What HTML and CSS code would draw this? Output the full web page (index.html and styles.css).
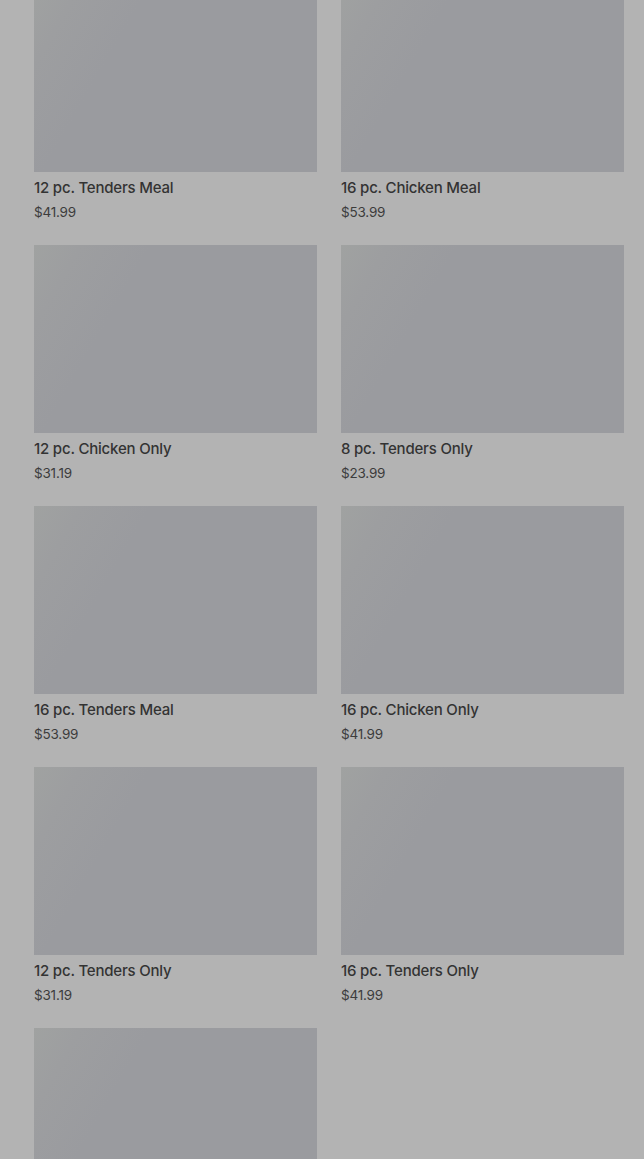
FILE: index.html
```html
<!DOCTYPE html>
<html>
<head>
<meta charset="utf-8">
<link rel="stylesheet" href="styles.css">
</head>
<body>
<div class="grid">
  <div class="card"><div class="thumb"></div><div class="title">12 pc. Tenders Meal</div><div class="price">$41.99</div></div>
  <div class="card"><div class="thumb"></div><div class="title">16 pc. Chicken Meal</div><div class="price">$53.99</div></div>
  <div class="card"><div class="thumb"></div><div class="title">12 pc. Chicken Only</div><div class="price">$31.19</div></div>
  <div class="card"><div class="thumb"></div><div class="title">8 pc. Tenders Only</div><div class="price">$23.99</div></div>
  <div class="card"><div class="thumb"></div><div class="title">16 pc. Tenders Meal</div><div class="price">$53.99</div></div>
  <div class="card"><div class="thumb"></div><div class="title">16 pc. Chicken Only</div><div class="price">$41.99</div></div>
  <div class="card"><div class="thumb"></div><div class="title">12 pc. Tenders Only</div><div class="price">$31.19</div></div>
  <div class="card"><div class="thumb"></div><div class="title">16 pc. Tenders Only</div><div class="price">$41.99</div></div>
  <div class="card last"><div class="thumb"></div></div>
</div>
</body>
</html>
```
FILE: styles.css
```css
html, body {
  margin: 0;
  padding: 0;
  background: #b3b3b3;
}
body {
  height: 1159px;
  overflow: hidden;
  font-family: Inter, "Liberation Sans", sans-serif;
}
.grid {
  margin-top: -16px;
  padding: 0 20px 0 34px;
  display: grid;
  grid-template-columns: 283px 283px;
  column-gap: 24px;
}
.card {
  height: 261px;
  display: flex;
  flex-direction: column;
}
.card.last {
  height: 147px;
}
.thumb {
  height: 188px;
  flex-shrink: 0;
  background-color: #9a9b9f;
  background-image: linear-gradient(120deg, #a0a2a1 0%, #9d9ea0 12%, rgba(154,155,159,0) 30%);
}
.title {
  margin-top: 7px;
  font-size: 15px;
  font-weight: 500;
  line-height: 18px;
  color: #333333;
  letter-spacing: -0.2px;
}
.price {
  margin-top: 7px;
  font-size: 13.5px;
  line-height: 17px;
  color: #3c3c3c;
  letter-spacing: -0.2px;
}
```
